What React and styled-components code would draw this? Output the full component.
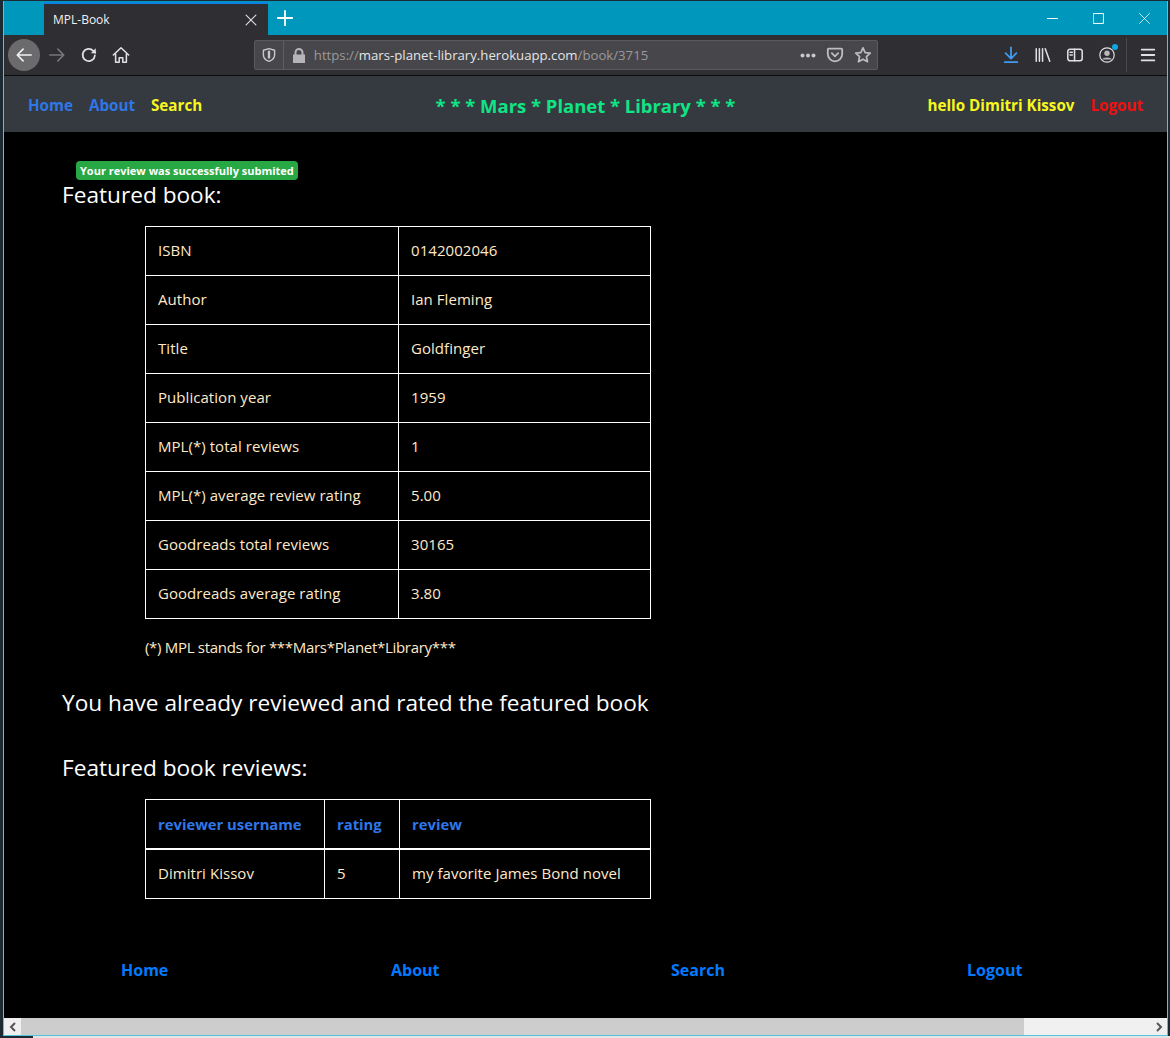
import React from "react";
import styled, { createGlobalStyle } from "styled-components";

const GlobalStyle = createGlobalStyle`
	html, body {
		margin: 0;
		padding: 0;
		background: #1c2b33;
		overflow: hidden;
	}
	* {
		box-sizing: border-box;
	}
`;

const bookRows = [
	["ISBN", "0142002046"],
	["Author", "Ian Fleming"],
	["Title", "Goldfinger"],
	["Publication year", "1959"],
	["MPL(*) total reviews", "1"],
	["MPL(*) average review rating", "5.00"],
	["Goodreads total reviews", "30165"],
	["Goodreads average rating", "3.80"],
];

const Icon = ({ children, size = 20, color = "#e1e1e3", sw = 1.7 }) => (
	<svg width={size} height={size} viewBox="0 0 20 20" fill="none" stroke={color} strokeWidth={sw} strokeLinecap="round" strokeLinejoin="round">
		{children}
	</svg>
);

const App = () => {
	return (
		<>
			<GlobalStyle />
			<Screen>
				<TitleBar>
					<Tab>
						<TabTitle>MPL-Book</TabTitle>
						<Icon size={14} sw={1.6}>
							<path d="M3 3l14 14M17 3L3 17" />
						</Icon>
					</Tab>
					<NewTab>
						<Icon size={18} color="#fff" sw={2}>
							<path d="M10 2v16M2 10h16" />
						</Icon>
					</NewTab>
					<WindowButtons>
						<Icon size={11} color="#fff" sw={1.8}>
							<path d="M0 10h20" />
						</Icon>
						<Icon size={11} color="#fff" sw={1.8}>
							<rect x="1" y="1" width="18" height="18" />
						</Icon>
						<Icon size={11} color="#fff" sw={1.4}>
							<path d="M1 1l18 18M19 1L1 19" />
						</Icon>
					</WindowButtons>
				</TitleBar>
				<Toolbar>
					<BackButton>
						<Icon size={18} color="#f2f2f3" sw={1.8}>
							<path d="M18 10H3M9 3.5L2.5 10 9 16.5" />
						</Icon>
					</BackButton>
					<ToolButton>
						<Icon size={18} color="#77767a" sw={1.8}>
							<path d="M2 10h15M11 3.5l6.5 6.5-6.5 6.5" />
						</Icon>
					</ToolButton>
					<ToolButton>
						<Icon size={18} sw={2}>
							<path d="M16.5 10.500a6.800 6.800 0 1 1-2-5.400L17 7.500" />
							<path d="M17.500 2.500v5.500H12" fill="#e1e1e3" stroke="none" />
						</Icon>
					</ToolButton>
					<ToolButton>
						<Icon size={18} sw={1.7}>
							<path d="M1.500 10L10 2l8.500 8M4 8.500V18h4v-5h4v5h4V8.500" />
						</Icon>
					</ToolButton>
					<UrlBar>
						<UrlIcon>
							<Icon size={16} color="#c8c8ca" sw={1.8}>
								<path d="M10 2l7 2v6c0 4-3 6.500-7 8-4-1.500-7-4-7-8V4z" />
								<path d="M10 6v7" strokeWidth="3" />
							</Icon>
						</UrlIcon>
						<LockIcon>
							<svg width="14" height="15" viewBox="0 0 14 15" fill="#b5b5b7">
								<path d="M1 6.500h1.500V4.500a4.500 4.500 0 0 1 9 0v2H13V15H1zM4.500 6.500h5v-2a2.500 2.500 0 0 0-5 0z" />
							</svg>
						</LockIcon>
						<Url>
							<UrlDim>https://</UrlDim>mars-planet-library.herokuapp.com<UrlDim>/book/3715</UrlDim>
						</Url>
						<UrlActions>
							<svg width="16" height="5" viewBox="0 0 16 5" fill="#c8c8ca">
								<circle cx="2.500" cy="2.500" r="2" />
								<circle cx="8" cy="2.500" r="2" />
								<circle cx="13.500" cy="2.500" r="2" />
							</svg>
							<Icon size={18} color="#bdbdbf" sw={2}>
								<path d="M3 3h14a1 1 0 0 1 1 1v5a8 8 0 0 1-16 0V4a1 1 0 0 1 1-1z" />
								<path d="M6.500 8l3.500 3.500L13.500 8" />
							</Icon>
							<Icon size={18} color="#bdbdbf" sw={1.9}>
								<path d="M10 2l2.400 5.300 5.700.6-4.300 3.900 1.200 5.700L10 14.600l-5 2.900 1.200-5.700L1.900 7.900l5.700-.6z" />
							</Icon>
						</UrlActions>
					</UrlBar>
					<ToolIcons>
						<Icon size={18} color="#3f9bf0" sw={2}>
							<path d="M10 1.500V13M4 8l6 6 6-6M3 18h14" />
						</Icon>
						<Icon size={18} sw={1.7}>
							<path d="M2.500 3v14M6 3v14M9.500 3v14M12.500 3l5 14" />
						</Icon>
						<Icon size={18} sw={1.7}>
							<rect x="2" y="3.500" width="16" height="13" rx="2.500" />
							<path d="M9.500 3.500v13M4.500 7h2.500M4.500 10h2.500" />
						</Icon>
						<Account>
							<Icon size={18} sw={1.3}>
								<circle cx="10" cy="10" r="8" />
								<circle cx="10" cy="8" r="3" fill="#b9b9bb" stroke="none" />
								<path d="M4.500 15c1-3 10-3 11 0" fill="#b9b9bb" stroke="none" />
							</Icon>
							<AccountDot />
						</Account>
					</ToolIcons>
					<ToolDivider />
					<Icon size={18} sw={2}>
						<path d="M3 4h14M3 10h14M3 16h14" />
					</Icon>
				</Toolbar>
				<NavBar>
					<NavLinks>
						<NavLink $color="#2f77e8">Home</NavLink>
						<NavLink $color="#2f77e8">About</NavLink>
						<NavLink $color="#f7f71e">Search</NavLink>
					</NavLinks>
					<Brand>* * * Mars * Planet * Library * * *</Brand>
					<NavUser>
						<NavLink $color="#f7f71e">hello Dimitri Kissov</NavLink>
						<NavLink $color="#f00f0f">Logout</NavLink>
					</NavUser>
				</NavBar>
				<Page>
					<Badge>Your review was successfully submited</Badge>
					<Heading>Featured book:</Heading>
					<DataTable>
						<colgroup>
							<col width="253" />
							<col width="252" />
						</colgroup>
						<tbody>
							{bookRows.map(([label, value]) => (
								<tr key={label}>
									<Cell>{label}</Cell>
									<Cell>{value}</Cell>
								</tr>
							))}
						</tbody>
					</DataTable>
					<Note>(*) MPL stands for ***Mars*Planet*Library***</Note>
					<NoticeHeading>You have already reviewed and rated the featured book</NoticeHeading>
					<ReviewsHeading>Featured book reviews:</ReviewsHeading>
					<DataTable>
						<colgroup>
							<col width="179" />
							<col width="75" />
							<col width="251" />
						</colgroup>
						<thead>
							<tr>
								<HeadCell>reviewer username</HeadCell>
								<HeadCell>rating</HeadCell>
								<HeadCell>review</HeadCell>
							</tr>
						</thead>
						<tbody>
							<tr>
								<ReviewCell>Dimitri Kissov</ReviewCell>
								<ReviewCell>5</ReviewCell>
								<ReviewCell>my favorite James Bond novel</ReviewCell>
							</tr>
						</tbody>
					</DataTable>
					<Footer>
						<FooterLink>Home</FooterLink>
						<FooterLink>About</FooterLink>
						<FooterLink>Search</FooterLink>
						<FooterLink>Logout</FooterLink>
					</Footer>
				</Page>
				<ScrollBar>
					<ScrollArrow>
						<svg width="10" height="10" viewBox="0 0 10 10" fill="none" stroke="#555" strokeWidth="2">
							<path d="M7 1L3 5l4 4" />
						</svg>
					</ScrollArrow>
					<ScrollThumb />
					<ScrollArrow>
						<svg width="10" height="10" viewBox="0 0 10 10" fill="none" stroke="#555" strokeWidth="2">
							<path d="M3 1l4 4-4 4" />
						</svg>
					</ScrollArrow>
				</ScrollBar>
			</Screen>
			<BehindWindow />
		</>
	);
};

export default App;

const Screen = styled.div`
	width: 1165px;
	height: 1035px;
	margin: 1px 0 0 3px;
	display: flex;
	flex-direction: column;
	border-left: 1px solid #56c3dc;
	border-right: 1px solid #56c3dc;
	border-bottom: 1px solid #56c3dc;
	font-family: "Open Sans", "Noto Sans", sans-serif;
	overflow: hidden;
`;

const BehindWindow = styled.div`
	height: 2px;
	margin-left: 33px;
	background: #e4e4e4;
`;

const TitleBar = styled.div`
	height: 34px;
	flex: none;
	display: flex;
	background: #0097bd;
	padding: 1px 0 0 40px;
`;

const Tab = styled.div`
	width: 224px;
	display: flex;
	align-items: center;
	justify-content: space-between;
	padding: 0 10px 0 9px;
	background: #2f2e32;
	border-top: 2px solid #0a84e0;
`;

const TabTitle = styled.span`
	font-size: 12px;
	color: #f0f0f0;
`;

const NewTab = styled.div`
	width: 34px;
	padding-bottom: 2px;
	display: flex;
	align-items: center;
	justify-content: center;
`;

const WindowButtons = styled.div`
	margin-left: auto;
	display: flex;
	align-items: center;
	gap: 35px;
	padding-right: 17px;
`;

const Toolbar = styled.div`
	height: 41px;
	flex: none;
	display: flex;
	align-items: center;
	background: #2f2e32;
	border-bottom: 1px solid #0c0c0d;
	padding: 0 10px 0 4px;
`;

const BackButton = styled.div`
	width: 32px;
	height: 32px;
	margin-right: 1px;
	border-radius: 50%;
	background: #6b6a6d;
	display: flex;
	align-items: center;
	justify-content: center;
`;

const ToolButton = styled.div`
	width: 32px;
	display: flex;
	justify-content: center;
`;

const UrlBar = styled.div`
	margin-left: 117px;
	width: 625px;
	height: 30px;
	display: flex;
	align-items: center;
	background: #47464a;
	border: 1px solid #5a595d;
	border-radius: 2px;
`;

const UrlIcon = styled.div`
	width: 29px;
	height: 100%;
	display: flex;
	align-items: center;
	justify-content: center;
	border-right: 1px solid #5f5e62;
`;

const LockIcon = styled.div`
	width: 30px;
	display: flex;
	justify-content: center;
`;

const Url = styled.span`
	font-size: 13.2px;
	color: #e4e4e5;
`;

const UrlDim = styled.span`
	color: #9a9a9c;
`;

const UrlActions = styled.div`
	margin-left: auto;
	display: flex;
	align-items: center;
	gap: 10px;
	padding-right: 5px;
`;

const ToolIcons = styled.div`
	margin-left: 124px;
	display: flex;
	align-items: center;
	gap: 14px;
`;

const Account = styled.div`
	position: relative;
	display: flex;
`;

const AccountDot = styled.span`
	position: absolute;
	top: -2px;
	right: -2px;
	width: 6px;
	height: 6px;
	border-radius: 50%;
	background: #0fa8e0;
`;

const ToolDivider = styled.div`
	width: 1px;
	height: 34px;
	margin: 0 12px 0 10px;
	background: #4a494d;
`;

const NavBar = styled.nav`
	height: 56px;
	flex: none;
	display: grid;
	grid-template-columns: 1fr auto 1fr;
	align-items: center;
	background: #343a40;
	padding: 2px 24px 0 24px;
`;

const NavLinks = styled.div`
	display: flex;
	gap: 16px;
`;

const NavUser = styled.div`
	display: flex;
	justify-content: flex-end;
	gap: 16px;
`;

const NavLink = styled.a`
	font-size: 15.2px;
	font-weight: 700;
	color: ${(props) => props.$color};
`;

const Brand = styled.div`
	font-size: 18.45px;
	font-weight: 700;
	color: #0fe585;
`;

const Page = styled.main`
	flex: 1;
	background: #000;
	padding: 29px 0 0 58px;
	color: #fff;
`;

const Badge = styled.span`
	display: block;
	width: fit-content;
	margin-left: 14px;
	padding: 2px 4px;
	background: #28a745;
	border-radius: 4px;
	font-size: 11px;
	line-height: 15px;
	font-weight: 700;
	color: #fff;
`;

const Heading = styled.h2`
	margin: 0 0 16px;
	font-size: 22.65px;
	line-height: 30px;
	font-weight: 400;
	color: #fff;
`;

const NoticeHeading = styled(Heading)`
	margin: 31px 0 0;
`;

const ReviewsHeading = styled(Heading)`
	margin: 35px 0 16px;
`;

const DataTable = styled.table`
	margin-left: 83px;
	width: 505px;
	table-layout: fixed;
	border-collapse: collapse;
`;

const Cell = styled.td`
	height: 49px;
	padding: 0 12px 2px;
	border: 1px solid #fff;
	font-size: 15px;
	letter-spacing: 0.05px;
	color: #ffe9c9;
`;

const ReviewCell = styled(Cell)`
	height: 50px;
`;

const HeadCell = styled.th`
	height: 49px;
	padding: 0 12px;
	border: 1px solid #fff;
	border-bottom-width: 2px;
	text-align: left;
	white-space: nowrap;
	font-size: 14.8px;
	font-weight: 700;
	color: #2f77e8;
`;

const Note = styled.p`
	margin: 18px 0 0 83px;
	font-size: 15px;
	letter-spacing: -0.3px;
	line-height: 20px;
	color: #ffe9c9;
`;

const Footer = styled.footer`
	margin-top: 60px;
	display: grid;
	grid-template-columns: 270px 280px 296px auto;
	padding-left: 59px;
`;

const FooterLink = styled.a`
	font-size: 16px;
	font-weight: 700;
	color: #007bff;
`;

const ScrollBar = styled.div`
	height: 17px;
	flex: none;
	display: flex;
	background: #f0f0f0;
`;

const ScrollArrow = styled.div`
	width: 17px;
	display: flex;
	align-items: center;
	justify-content: center;
`;

const ScrollThumb = styled.div`
	width: 1003px;
	margin-right: auto;
	background: #cdcdcd;
`;
